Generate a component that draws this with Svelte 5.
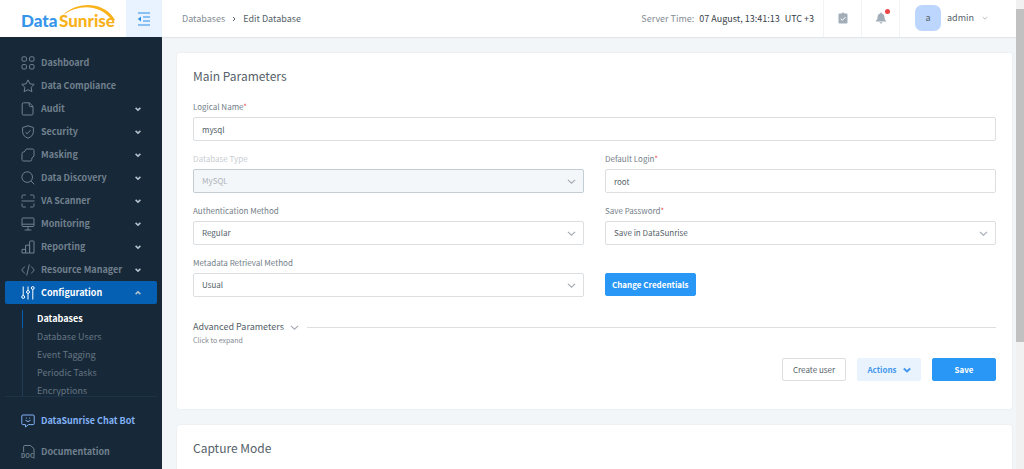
<script>
	// ---- icon paths, drawn on a 14x14 grid ----
	const icons = {
		dashboard:
			'M2 .8h2.400q1 0 1 1v2.400q0 1-1 1H2q-1 0-1-1V1.800q0-1 1-1zM9.600.8H12q1 0 1 1v2.400q0 1-1 1H9.600q-1 0-1-1V1.800q0-1 1-1zM2 8.600h2.400q1 0 1 1V12q0 1-1 1H2q-1 0-1-1V9.600q0-1 1-1zM9.600 8.600H12q1 0 1 1V12q0 1-1 1H9.600q-1 0-1-1V9.600q0-1 1-1z',
		star: 'M7 .9l1.900 3.900 4.300.6-3.100 3 .8 4.300L7 10.700l-3.900 2 .8-4.300-3.100-3 4.300-.6z',
		file: 'M2.400.8h6L12 4.400v7.400q0 1.200-1.200 1.200H2.400q-1.200 0-1.200-1.200V2Q1.200.8 2.400.8zM8.200.8v2.600q0 1.200 1.200 1.200H12',
		shield: 'M7 .8l5.400 1.700v4.200c0 3.200-2.300 5.300-5.400 6.500C3.900 12 1.600 9.900 1.600 6.700V2.500zM4.500 7.200l1.700 1.600 3.300-3.700',
		mask: 'M5.300 1h6.200q1.500 0 1.500 1.500v5.600L10.800 10v1.500q0 1.500-1.500 1.500H2.500Q1 13 1 11.500V5.600q0-1.600 1.600-1.600h.6z',
		search: 'M6.200.8a5.300 5.300 0 1 1 0 10.600a5.300 5.300 0 1 1 0-10.600M10 10l3.300 3.300',
		scan: 'M1 4.500V2.200Q1 1 2.200 1h2.600M9.200 1h2.600Q13 1 13 2.200v2.300M1 9.500v2.300Q1 13 2.200 13h2.600M9.200 13h2.600q1.200 0 1.200-1.200V9.500M.5 7h13',
		monitor: 'M2 1h10q1 0 1 1v6.500q0 1-1 1H2q-1 0-1-1V2q0-1 1-1zM1 7.200h12M7 9.500V13M3.600 13h6.800',
		chart: 'M1 9.400h3.600V13H1zM4.600 5.200h4V13h-4zM8.600 1.800q0-.8.8-.8h2.800q.8 0 .8.800V13H8.600z',
		code: 'M3.800 3.500L.7 7l3.100 3.500M10.200 3.500L13.300 7l-3.100 3.500M8.300 1.500l-2.600 11',
		sliders:
			'M2.200.5v9M2.200 9.500a1.400 1.400 0 1 1 0 2.900a1.400 1.400 0 1 1 0-2.900M7 .5v4M7 4.500a1.400 1.400 0 1 1 0 2.900a1.400 1.400 0 1 1 0-2.900M7 7.400v6.100M11.800 3.400v10.100M11.800.6a1.400 1.400 0 1 1 0 2.800a1.400 1.400 0 1 1 0-2.800',
		chat: 'M1.800 1h10.400q1 0 1 1v7.600q0 1-1 1H7.500L4.500 13v-2.400H1.800q-1 0-1-1V2q0-1 1-1zM5.300 3.600v1M8.700 3.600v1M4.500 6.300q2.500 2.600 5 0',
		doc: 'M2.600 7V1.700Q2.600.5 3.800.5h5.800L13 3.700V13.500'
	};

	const menu = [
		{ label: 'Dashboard', icon: 'dashboard' },
		{ label: 'Data Compliance', icon: 'star' },
		{ label: 'Audit', icon: 'file', nested: true },
		{ label: 'Security', icon: 'shield', nested: true },
		{ label: 'Masking', icon: 'mask', nested: true },
		{ label: 'Data Discovery', icon: 'search', nested: true },
		{ label: 'VA Scanner', icon: 'scan', nested: true },
		{ label: 'Monitoring', icon: 'monitor', nested: true },
		{ label: 'Reporting', icon: 'chart', nested: true },
		{ label: 'Resource Manager', icon: 'code', nested: true },
		{ label: 'Configuration', icon: 'sliders', nested: true, open: true }
	];
	const submenu = ['Databases', 'Database Users', 'Event Tagging', 'Periodic Tasks', 'Encryptions'];

	// ---- form state ----
	let logicalName = $state('mysql');
	let login = $state('root');
</script>

{#snippet icon(name)}
	<svg class="icon" viewBox="0 0 14 14" aria-hidden="true"><path d={icons[name]} /></svg>
{/snippet}

{#snippet chevron(cls)}
	<svg class="chevron {cls}" viewBox="0 0 8 8" aria-hidden="true"><path d="M.8 2.500L4 5.500l3.200-3" /></svg>
{/snippet}

{#snippet selectField(id, label, value, required, disabled)}
	<div class="field" class:disabled>
		<label for={id}>{label}{#if required}<i>*</i>{/if}</label>
		<div class="select">
			<select {id} {disabled}><option>{value}</option></select>
			{@render chevron('thin')}
		</div>
	</div>
{/snippet}

<div class="app">
	<aside class="sidebar">
		<div class="brand">
			<a class="logo" href="#home" aria-label="DataSunrise">
				<svg viewBox="0 0 126 37">
					<text class="blue" x="21" y="27">Data</text>
					<text class="orange" x="59" y="27">Sunrise</text>
					<path d="M63 15C76 2 101 1 113 17L115 20L112 20C99 4 79 4 63 15z" />
				</svg>
			</a>
			<button class="toggle" aria-label="Collapse menu">
				<svg viewBox="0 0 14 14">
					<path d="M1 1h12M6 5h7M6 9h7M1 13h12" />
					<path class="solid" d="M4 4.500v5L.8 7z" />
				</svg>
			</button>
		</div>

		<nav class="menu">
			{#each menu as item}
				<a class="item" class:open={item.open} href="#{item.icon}">
					{@render icon(item.icon)}
					<span>{item.label}</span>
					{#if item.nested}{@render chevron(item.open ? 'up' : '')}{/if}
				</a>
			{/each}
			<div class="submenu">
				{#each submenu as label, i}
					<a class:active={i === 0} href="#sub-{i}">{label}</a>
				{/each}
			</div>
		</nav>

		<div class="help">
			<a class="item bot" href="#chat">{@render icon('chat')}<span>DataSunrise Chat Bot</span></a>
			<a class="item" href="#docs">
				<svg class="icon" viewBox="0 0 14 14" aria-hidden="true">
					<path d={icons.doc} />
					<text x="0" y="13">DOC</text>
				</svg>
				<span>Documentation</span>
			</a>
		</div>
	</aside>

	<div class="page">
		<header class="topbar">
			<div class="crumbs">
				<a href="#databases">Databases</a>
				<svg viewBox="0 0 4 6" aria-hidden="true"><path d="M1 1l2 2-2 2" /></svg>
				<span>Edit Database</span>
			</div>
			<div class="time">
				<span>Server Time:</span>
				<b>07 August, 13:41:13</b>
				<b>UTC +3</b>
			</div>
			<button class="tool" aria-label="Tasks">
				<svg viewBox="0 0 12 12">
					<path d="M2.500 1.500h2a1.600 1.600 0 0 1 3 0h2q1 0 1 1v8q0 1-1 1h-7q-1 0-1-1v-8q0-1 1-1z" />
					<path class="tick" d="M3.700 6.700l1.600 1.600 3.200-3.300" />
				</svg>
			</button>
			<button class="tool" aria-label="Notifications">
				<svg viewBox="0 0 12 12">
					<path d="M6 .5q.8 0 .8 1c1.800.5 2.700 1.900 2.700 3.700 0 2 .6 2.800 1.700 3.600v.7H.8v-.7c1.100-.8 1.700-1.600 1.700-3.600 0-1.800.9-3.200 2.700-3.700q0-1 .8-1zM4.500 10.200h3q-.3 1.300-1.500 1.300t-1.500-1.300z" />
				</svg>
				<span class="dot"></span>
			</button>
			<button class="user">
				<span class="avatar">a</span>
				<span>admin</span>
				{@render chevron('small')}
			</button>
		</header>

		<main class="content">
			<section class="card">
				<h2>Main Parameters</h2>
				<form class="form">
					<div class="field wide">
						<label for="name">Logical Name<i>*</i></label>
						<input id="name" bind:value={logicalName} />
					</div>
					{@render selectField('type', 'Database Type', 'MySQL', false, true)}
					<div class="field">
						<label for="login">Default Login<i>*</i></label>
						<input id="login" bind:value={login} />
					</div>
					{@render selectField('auth', 'Authentication Method', 'Regular', false, false)}
					{@render selectField('password', 'Save Password', 'Save in DataSunrise', true, false)}
					{@render selectField('metadata', 'Metadata Retrieval Method', 'Usual', false, false)}
					<button type="button" class="btn primary credentials">Change Credentials</button>
				</form>

				<button class="advanced">
					<span class="advanced-title">Advanced Parameters {@render chevron('thin')}</span>
					<small>Click to expand</small>
				</button>

				<div class="actions">
					<button class="btn">Create user</button>
					<button class="btn soft">Actions {@render chevron('bold')}</button>
					<button class="btn primary">Save</button>
				</div>
			</section>

			<section class="card">
				<h2>Capture Mode</h2>
			</section>
		</main>
	</div>

	<div class="scrollbar"><span class="thumb"></span></div>
</div>

<style>
	:global(body) {
		margin: 0;
	}
	.app {
		display: flex;
		height: 100vh;
		overflow: hidden;
		background: #f2f6f8;
		color: #555f69;
		font-family: 'Noto Sans CJK SC', 'Noto Sans', sans-serif;
		font-size: 9px;
		line-height: 14px;
	}
	a {
		color: inherit;
		text-decoration: none;
	}
	button,
	input,
	select {
		box-sizing: border-box;
		margin: 0;
		padding: 0;
		border: 0;
		background: none;
		color: inherit;
		font: inherit;
	}
	svg {
		display: block;
		flex: none;
		fill: none;
		stroke: currentColor;
	}

	/* ---- sidebar ---- */
	.sidebar {
		display: flex;
		flex: none;
		flex-direction: column;
		width: 162px;
		background: #172938;
		color: #71808e;
	}
	.brand {
		display: flex;
		flex: none;
		height: 37px;
		background: #fff;
	}
	.logo {
		flex: 1;
	}
	.logo svg {
		width: 126px;
		height: 37px;
		stroke: none;
	}
	.logo text {
		font-family: Lato, sans-serif;
		font-size: 17px;
		font-weight: 900;
	}
	.logo .blue {
		fill: #3595ea;
	}
	.logo .orange,
	.logo path {
		fill: #f9b21c;
	}
	.toggle {
		display: grid;
		place-items: center;
		width: 36px;
		background: #e8f3ff;
		color: #2c8fea;
	}
	.toggle svg {
		width: 14px;
		height: 14px;
	}
	.solid {
		fill: currentColor;
		stroke: none;
	}
	.menu {
		flex: 1;
		min-height: 0;
		padding: 14px 5px 0;
		overflow: hidden;
	}
	.item {
		display: flex;
		align-items: center;
		gap: 6px;
		height: 23px;
		padding: 0 16px;
		font-weight: 700;
		white-space: nowrap;
	}
	.item span {
		flex: 1;
	}
	.icon {
		width: 14px;
		height: 14px;
		overflow: visible;
	}
	.icon text {
		fill: currentColor;
		stroke: none;
		font-size: 6px;
		font-weight: 700;
	}
	.item.open {
		border-radius: 2px;
		background: #0560b3;
		color: #fff;
	}
	.submenu {
		display: flex;
		flex-direction: column;
		margin: 6px 0 0 17px;
	}
	.submenu a {
		flex: none;
		height: 18px;
		padding-left: 14px;
		border-left: 1px solid #223d53;
		color: #657482;
		line-height: 18px;
	}
	.submenu .active {
		border-color: #0560b3;
		color: #fff;
		font-weight: 700;
	}
	.help {
		margin: 0 5px;
		padding: 8px 0 2px;
		border-top: 1px solid #1d3448;
	}
	.help .item {
		height: 31px;
	}
	.help .bot {
		color: #82b1f5;
	}

	.chevron {
		width: 8px;
		height: 8px;
	}
	.item .chevron {
		width: 6px;
		height: 6px;
		color: #b4c2cd;
		stroke-width: 2;
	}
	.chevron.up {
		transform: rotate(180deg);
	}
	.chevron.thin {
		width: 9px;
		height: 9px;
		color: #a3abb3;
	}
	.chevron.small {
		width: 6px;
		height: 6px;
		color: #a3abb3;
	}
	.chevron.bold {
		stroke-width: 2;
	}

	/* ---- top bar ---- */
	.page {
		display: flex;
		flex: 1;
		flex-direction: column;
		min-width: 0;
	}
	.topbar {
		display: flex;
		flex: none;
		height: 37px;
		background: #fff;
		box-shadow: 0 1px 1px #e1e6ea;
	}
	.crumbs {
		display: flex;
		flex: 1;
		align-items: center;
		gap: 7px;
		padding-left: 20px;
	}
	.crumbs a,
	.time span {
		color: #838c95;
	}
	.crumbs svg {
		width: 4px;
		height: 6px;
	}
	.time {
		display: flex;
		align-items: center;
		gap: 5px;
		padding-right: 9px;
	}
	.time b {
		color: #38414a;
		font-weight: 400;
	}
	.tool {
		display: grid;
		position: relative;
		place-items: center;
		width: 38px;
		padding-bottom: 2px;
		border-left: 1px solid #f0f4f6;
		color: #a2adb8;
	}
	.tool svg {
		width: 12px;
		height: 12px;
		fill: currentColor;
		stroke: none;
	}
	.tool .tick {
		fill: none;
		stroke: #fff;
	}
	.dot {
		position: absolute;
		top: 9px;
		right: 9px;
		width: 5px;
		height: 5px;
		border-radius: 50%;
		background: #ee4444;
	}
	.user {
		display: flex;
		align-items: center;
		gap: 6px;
		padding: 0 28px 2px 15px;
		border-left: 1px solid #f0f4f6;
	}
	.user .chevron {
		margin-left: 2px;
	}
	.avatar {
		width: 26px;
		border-radius: 7px;
		background: #bcd6fd;
		line-height: 26px;
	}

	/* ---- cards ---- */
	.content {
		flex: 1;
		min-height: 0;
		padding: 16px 4px 0 15px;
		overflow: hidden;
	}
	.card {
		margin-bottom: 16px;
		padding: 13px 16px 28px;
		border-radius: 3px;
		background: #fff;
		box-shadow: 0 0 2px #dfe5e8;
	}
	h2 {
		margin: 0;
		font-size: 12px;
		font-weight: 400;
		line-height: 20px;
	}
	.form {
		display: grid;
		grid-template-columns: 1fr 1fr;
		gap: 11px 21px;
		margin-top: 14px;
	}
	.wide {
		grid-column: span 2;
	}
	.field {
		display: flex;
		flex-direction: column;
		gap: 3px;
	}
	label {
		color: #737e88;
		font-size: 8px;
	}
	label i {
		color: #ee5a5a;
		font-style: normal;
	}
	.field input,
	.field select {
		width: 100%;
		height: 24px;
		padding: 0 8px;
		border: 1px solid #dcdfe2;
		border-radius: 2px;
		background: #fff;
		font-size: 8px;
	}
	.select {
		position: relative;
	}
	.field select {
		appearance: none;
	}
	.select .chevron {
		position: absolute;
		top: 8px;
		right: 8px;
	}
	.disabled label {
		color: #c8cdd1;
	}
	.disabled select {
		border-color: #c3cdd4;
		background: #f4f7f9;
		color: #adb5bb;
		opacity: 1;
	}
	.btn {
		min-width: 64px;
		height: 23px;
		border: 1px solid #dcdfe2;
		border-radius: 2px;
		font-size: 8px;
	}
	.primary {
		border-color: #2997f5;
		background: #2997f5;
		color: #fff;
		font-weight: 700;
	}
	.credentials {
		align-self: end;
		justify-self: start;
		margin-bottom: 1px;
		padding: 0 6px;
	}
	.advanced {
		display: flex;
		flex-direction: column;
		width: 100%;
		margin-top: 23px;
		text-align: left;
	}
	.advanced-title {
		display: flex;
		align-items: center;
		gap: 6px;
		width: 100%;
	}
	.advanced-title::after {
		flex: 1;
		height: 1px;
		margin-left: 2px;
		background: #dcdfe2;
		content: '';
	}
	.advanced small {
		color: #7f8891;
		font-size: 7px;
		line-height: 12px;
	}
	.actions {
		display: flex;
		justify-content: flex-end;
		gap: 11px;
		margin-top: 12px;
	}
	.soft {
		display: flex;
		align-items: center;
		justify-content: center;
		gap: 6px;
		border-color: #e8f3fd;
		background: #e8f3fd;
		color: #4698ec;
		font-weight: 700;
	}

	/* ---- page scrollbar ---- */
	.scrollbar {
		flex: none;
		width: 8px;
		background: #f1f1f1;
	}
	.thumb {
		display: block;
		height: 71%;
		margin-top: 9px;
		background: #c1c1c1;
	}
</style>
